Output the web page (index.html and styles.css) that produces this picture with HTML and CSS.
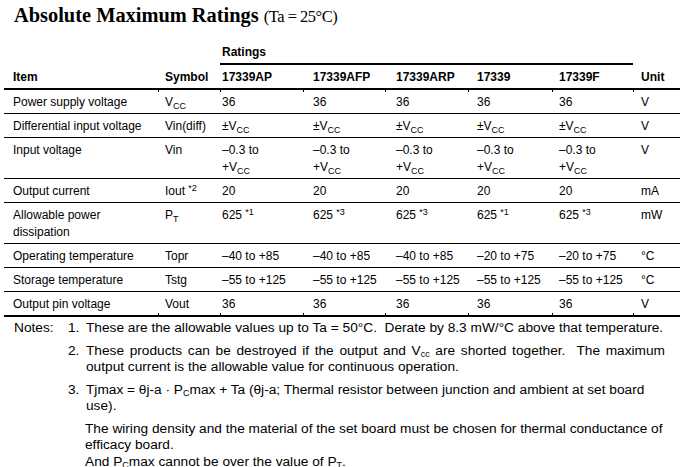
FILE: index.html
```html
<!DOCTYPE html>
<html>
<head>
<meta charset="utf-8">
<link rel="stylesheet" href="styles.css">
</head>
<body>
<div class="page">
  <h1 class="title">Absolute Maximum Ratings <span class="cond">(Ta = 25°C)</span></h1>
  <div class="table-wrap">
    <table class="ratings">
      <colgroup>
        <col class="w-item"><col class="w-sym"><col class="w-ap"><col class="w-afp"><col class="w-arp"><col class="w-p"><col class="w-f"><col class="w-unit">
      </colgroup>
      <thead>
        <tr class="hr1">
          <th rowspan="2" class="c1 span2">Item</th>
          <th rowspan="2" class="c2 span2">Symbol</th>
          <th colspan="5" class="grp"><div class="grp-line">Ratings</div></th>
          <th rowspan="2" class="span2">Unit</th>
        </tr>
        <tr class="hr2">
          <th>17339AP</th><th>17339AFP</th><th>17339ARP</th><th>17339</th><th>17339F</th>
        </tr>
      </thead>
      <tbody>
        <tr>
          <td class="c1">Power supply voltage</td><td class="c2">V<sub>CC</sub></td>
          <td>36</td><td>36</td><td>36</td><td>36</td><td>36</td><td>V</td>
        </tr>
        <tr>
          <td class="c1">Differential input voltage</td><td class="c2">Vin(diff)</td>
          <td>±V<sub>CC</sub></td><td>±V<sub>CC</sub></td><td>±V<sub>CC</sub></td><td>±V<sub>CC</sub></td><td>±V<sub>CC</sub></td><td>V</td>
        </tr>
        <tr>
          <td class="c1">Input voltage</td><td class="c2">Vin</td>
          <td>–0.3 to<br>+V<sub>CC</sub></td><td>–0.3 to<br>+V<sub>CC</sub></td><td>–0.3 to<br>+V<sub>CC</sub></td><td>–0.3 to<br>+V<sub>CC</sub></td><td>–0.3 to<br>+V<sub>CC</sub></td><td>V</td>
        </tr>
        <tr>
          <td class="c1">Output current</td><td class="c2">Iout <sup>*2</sup></td>
          <td>20</td><td>20</td><td>20</td><td>20</td><td>20</td><td>mA</td>
        </tr>
        <tr>
          <td class="c1">Allowable power<br>dissipation</td><td class="c2">P<sub>T</sub></td>
          <td>625 <sup>*1</sup></td><td>625 <sup>*3</sup></td><td>625 <sup>*3</sup></td><td>625 <sup>*1</sup></td><td>625 <sup>*3</sup></td><td>mW</td>
        </tr>
        <tr>
          <td class="c1">Operating temperature</td><td class="c2">Topr</td>
          <td>–40 to +85</td><td>–40 to +85</td><td>–40 to +85</td><td>–20 to +75</td><td>–20 to +75</td><td>°C</td>
        </tr>
        <tr>
          <td class="c1">Storage temperature</td><td class="c2">Tstg</td>
          <td>–55 to +125</td><td>–55 to +125</td><td>–55 to +125</td><td>–55 to +125</td><td>–55 to +125</td><td>°C</td>
        </tr>
        <tr class="last">
          <td class="c1">Output pin voltage</td><td class="c2">Vout</td>
          <td>36</td><td>36</td><td>36</td><td>36</td><td>36</td><td>V</td>
        </tr>
      </tbody>
    </table>
    <span class="tick t-top" style="left:154px"></span>
    <span class="tick t-top" style="left:216px"></span>
    <span class="tick t-top" style="left:299px"></span>
    <span class="tick t-top" style="left:381px"></span>
    <span class="tick t-top" style="left:464px"></span>
    <span class="tick t-top" style="left:548px"></span>
    <span class="tick t-top" style="left:629px"></span>
    <span class="tick t-bot" style="left:154px"></span>
    <span class="tick t-bot" style="left:216px"></span>
    <span class="tick t-bot" style="left:299px"></span>
    <span class="tick t-bot" style="left:381px"></span>
    <span class="tick t-bot" style="left:464px"></span>
    <span class="tick t-bot" style="left:548px"></span>
    <span class="tick t-bot" style="left:629px"></span>
  </div>
  <div class="notes">
    <div class="lbl">Notes:</div>
    <div class="num">1.</div>
    <div class="txt"><span class="ln">These are the allowable values up to Ta = 50°C.&nbsp; Derate by 8.3 mW/°C above that temperature.</span></div>

    <div class="num">2.</div>
    <div class="txt"><span class="ln just">These products can be destroyed if the output and V<sub class="s">cc</sub> are shorted together.&nbsp; The maximum</span><span class="ln">output current is the allowable value for continuous operation.</span></div>

    <div class="num">3.</div>
    <div class="txt"><span class="ln">Tjmax = θj-a · P<sub class="s">C</sub>max + Ta (θj-a; Thermal resistor between junction and ambient at set board</span><span class="ln">use).</span></div>

    <div class="txt para"><span class="ln">The wiring density and the material of the set board must be chosen for thermal conductance of</span><span class="ln">efficacy board.</span><span class="ln">And P<sub class="s">C</sub>max cannot be over the value of P<sub class="s">T</sub>.</span></div>
  </div>
</div>
</body>
</html>
```

FILE: styles.css
```css
* { box-sizing: border-box; }
html, body { margin: 0; padding: 0; background: #fff; }
body {
  color: #000;
  font-family: "Liberation Sans", Arial, sans-serif;
}
.page {
  width: 693px;
  height: 467px;
  overflow: hidden;
  padding: 3px 0 0 4px;
}
.title {
  margin: 0 0 0 10px;
  height: 24px;
  font-family: "Liberation Serif", "Times New Roman", serif;
  font-size: 20.4px;
  line-height: 24px;
  font-weight: bold;
}
.title .cond {
  font-weight: normal;
  font-size: 16.5px;
  line-height: 1;
  letter-spacing: -0.5px;
}

.table-wrap { position: relative; margin-top: 17px; }
.ratings {
  width: 676px;
  table-layout: fixed;
  border-collapse: separate;
  border-spacing: 0;
  font-size: 12px;
  line-height: 17px;
}
.w-item { width: 154px; }
.w-sym { width: 62px; }
.w-ap { width: 91px; }
.w-afp { width: 83px; }
.w-arp { width: 81px; }
.w-p { width: 82px; }
.w-f { width: 82px; }
.w-unit { width: 41px; }

th {
  text-align: left;
  font-weight: bold;
  padding: 0 0 0 2px;
  vertical-align: bottom;
  white-space: nowrap;
}
.hr1 .grp { padding: 0; }
.grp-line {
  padding: 0 0 2px 2px;
  margin-right: 6px;
  border-bottom: 2px solid #000;
}
.hr2 th { padding-top: 4px; padding-bottom: 2px; border-bottom: 2px solid #000; }
th.span2 { padding-bottom: 2px; border-bottom: 2px solid #000; }

td {
  padding: 4px 0 2px 2px;
  vertical-align: top;
  border-bottom: 1px solid #000;
  white-space: nowrap;
}
tr.last td { border-bottom: 2px solid #000; }
.c1 { padding-left: 9px; }
.c2 { padding-left: 7px; }

sub {
  font-size: 9px;
  line-height: 0;
  vertical-align: -3px;
}
sup {
  font-size: 9px;
  line-height: 0;
  vertical-align: 4px;
}

.tick {
  position: absolute;
  width: 1px;
  height: 2px;
  background: #000;
}
.t-top { top: 46px; }
.t-bot { top: 269px; }

.notes {
  margin-top: 3px;
  padding-left: 10px;
  display: grid;
  grid-template-columns: 54px 18px 579px;
  row-gap: 6px;
  font-size: 13.7px;
  line-height: 16.5px;
}
.lbl { grid-column: 1; }
.num { grid-column: 2; }
.txt { grid-column: 3; }
.para { grid-column: 3; margin-left: -1px; }
.ln { display: block; white-space: nowrap; }
.ln.just { text-align: justify; text-align-last: justify; white-space: normal; }
sub.s { font-size: 9px; line-height: 0; vertical-align: -2px; }
```
